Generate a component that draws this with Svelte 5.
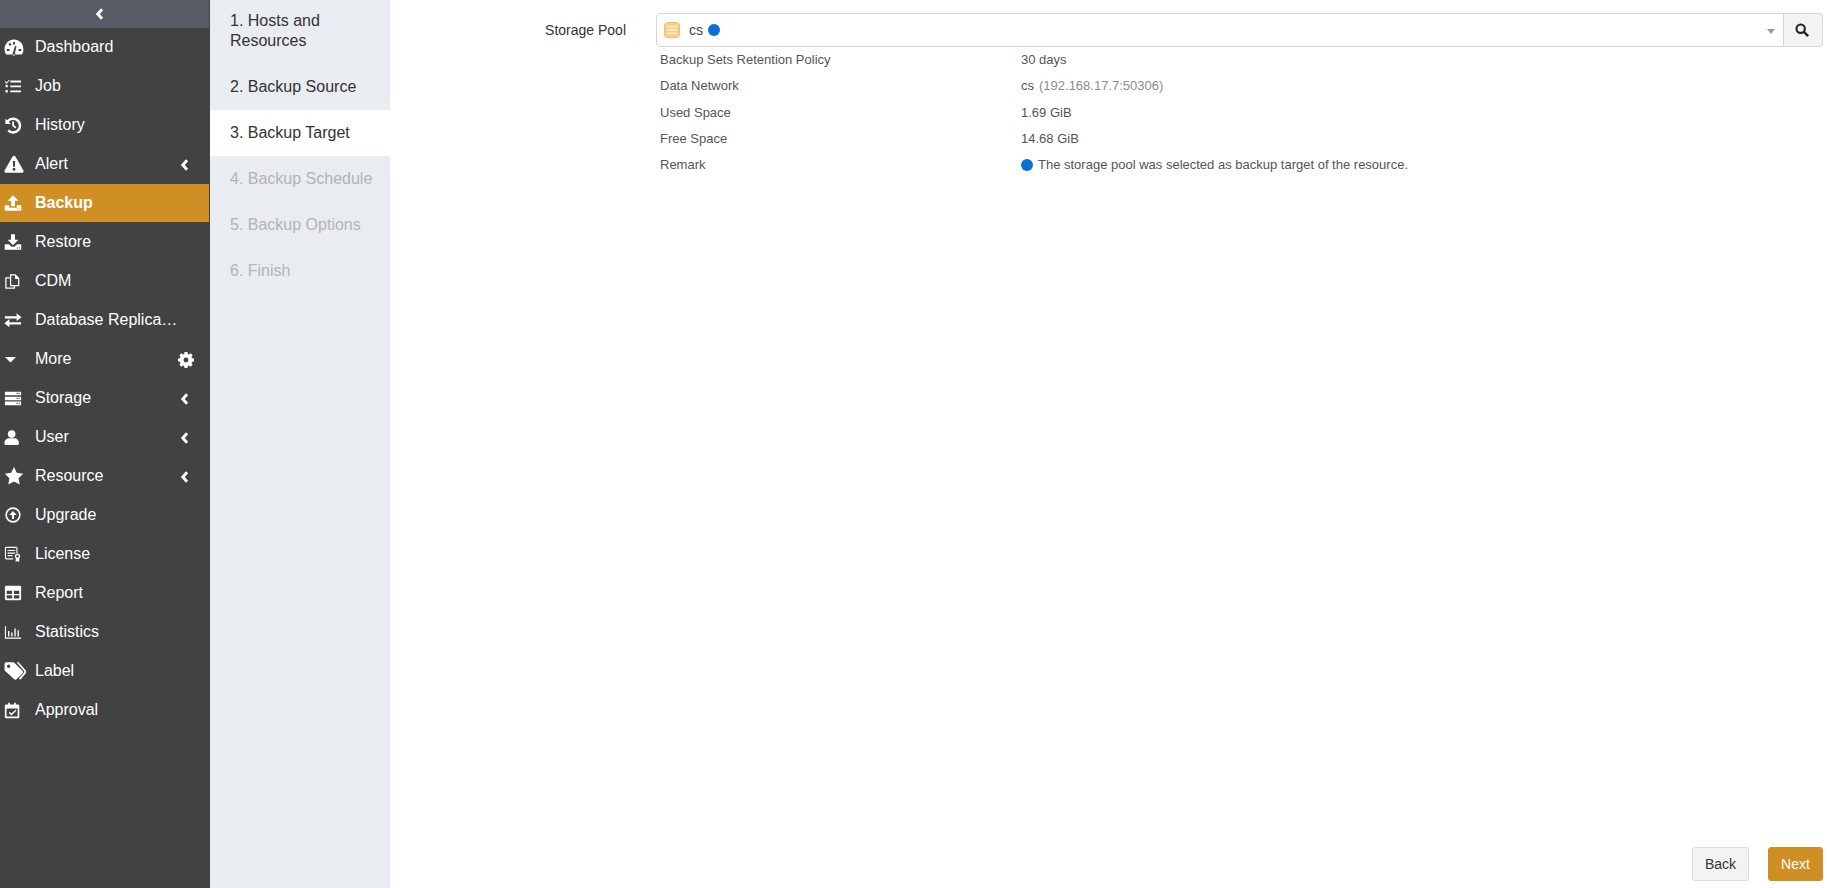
<script>
const menu = [
  { name: 'Dashboard', icon: 'dashboard' },
  { name: 'Job', icon: 'job', size: 'sm' },
  { name: 'History', icon: 'history', size: 'sm' },
  { name: 'Alert', icon: 'alert', arrow: true },
  { name: 'Backup', icon: 'upload', active: true, size: 'sm' },
  { name: 'Restore', icon: 'download', size: 'sm' },
  { name: 'CDM', icon: 'copy', size: 'xs' },
  { name: 'Database Replication', icon: 'exchange', size: 'sm' },
  { name: 'More', icon: 'caret', gear: true },
  { name: 'Storage', icon: 'server', arrow: true, size: 'sm' },
  { name: 'User', icon: 'user', arrow: true, size: 'xs' },
  { name: 'Resource', icon: 'star', arrow: true },
  { name: 'Upgrade', icon: 'upgrade', size: 'sm' },
  { name: 'License', icon: 'license', size: 'sm' },
  { name: 'Report', icon: 'table', size: 'sm' },
  { name: 'Statistics', icon: 'chart', size: 'sm' },
  { name: 'Label', icon: 'tags', size: 'lg' },
  { name: 'Approval', icon: 'approval', size: 'xs' }
]

const steps = [
  { name: '1. Hosts and Resources', first: true },
  { name: '2. Backup Source' },
  { name: '3. Backup Target', current: true },
  { name: '4. Backup Schedule', off: true },
  { name: '5. Backup Options', off: true },
  { name: '6. Finish', off: true }
]

const rows = [
  ['Backup Sets Retention Policy', '30 days'],
  ['Data Network', 'cs'],
  ['Used Space', '1.69 GiB'],
  ['Free Space', '14.68 GiB'],
  ['Remark', 'The storage pool was selected as backup target of the resource.']
]
</script>

{#snippet chevron()}
  <svg class="chev" viewBox="0 0 10 14" width="9" height="12"><path d="M8 1.500 3 7l5 5.500" fill="none" stroke="currentColor" stroke-width="3.400"/></svg>
{/snippet}

{#snippet icon(n, size)}
  <svg class="ico {size || ''}" viewBox="0 0 20 20" fill="#fff">
    {#if n === 'dashboard'}
      <path fill-rule="evenodd" d="M10 2.600C4.700 2.600.6 6.900.6 12.200c0 1.900.5 3.700 1.500 5.200h15.800c1-1.500 1.500-3.300 1.500-5.200 0-5.300-4.100-9.600-9.400-9.600ZM9 5h2v2.400H9ZM4.500 7l1.700-1.200 1.300 2L5.900 9ZM2.800 12h2.700v2H2.800Zm11.700 0h2.700v2h-2.700ZM9 15.800l1.900-6.800 1.700.5-1.700 6.500a1.500 1.500 0 1 1-1.900-.2Z"/>
    {:else if n === 'job'}
      <path d="M7 4h12v2H7Zm0 5.500h12v2H7Zm0 5.500h12v2H7ZM1.500 4.500 3 5.800 5.500 3l.8.7L3 7.500.8 5.300Zm.2 4.200h2.500v2.600H1.700Zm0 5.800h2.500v2.600H1.700Z"/>
    {:else if n === 'history'}
      <path d="M1.500 3v6h6L5.200 6.700A6.300 6.300 0 1 1 5.500 15l-1.800 1.900A9 9 0 1 0 3.300 4.800Z"/><path d="M9.200 6h1.900v4.300l2.700 2-1.100 1.500-3.500-2.600Z"/>
    {:else if n === 'alert'}
      <path fill-rule="evenodd" d="M10 1.800c.6 0 1.100.3 1.400.8l8 14c.6 1-.1 2.200-1.300 2.200H1.900c-1.200 0-1.900-1.200-1.300-2.200l8-14c.3-.5.8-.8 1.400-.8ZM8.800 7l.3 5.800h1.800L11.200 7ZM10 13.800a1.500 1.500 0 1 0 0 3 1.500 1.500 0 0 0 0-3Z"/>
    {:else if n === 'upload'}
      <path fill-rule="evenodd" d="M10 1.500 16 7.500h-3.800v6H7.800v-6H4ZM.8 12.500h5v2.800h8.400v-2.800h5v6H.8ZM14.500 16.200h1v1h-1Zm2.200 0h1v1h-1Z"/>
    {:else if n === 'download'}
      <path fill-rule="evenodd" d="M7.800 1.500h4.400v6H16L10 13.500 4 7.500h3.800ZM.8 12.500h4.700L8.300 15.300h3.400l2.800-2.800h4.700v6H.8ZM14.500 16.200h1v1h-1Zm2.200 0h1v1h-1Z"/>
    {:else if n === 'copy'}
      <path fill-rule="evenodd" d="M7 1.500h6.500L18 6v9.500H13v3H1.500V5H7Zm1.500 1.500v11h8V7H13V3Zm-1.500 3.500H3V17h8.500v-1.500H7Z"/>
    {:else if n === 'exchange'}
      <path d="M14 2.500 19.500 7 14 11V8.200H1V5.800h13ZM6 9l-5.500 4.500L6 18v-3h13v-2.400H6Z"/>
    {:else if n === 'caret'}
      <path d="M1 8h11L6.500 13.500Z"/>
    {:else if n === 'server'}
      <path fill-rule="evenodd" d="M1 3h18v4H1Zm0 5.500h18v4H1ZM1 14h18v4H1Zm13-9.800h1.200v1.400H14Zm2.300 0h1.200v1.400h-1.200Zm-2.300 5.600h1.200v1.400H14Zm2.300 0h1.200v1.400h-1.200Zm-2.300 5.500h1.200v1.400H14Zm2.300 0h1.200v1.400h-1.200Z"/>
    {:else if n === 'user'}
      <circle cx="9" cy="6" r="4.500"/><path d="M6 11h6c3 0 5.500 2.400 5.500 5.300V17c0 1-.8 1.800-1.800 1.800H2.300C1.300 18.800.5 18 .5 17v-.7C.5 13.400 3 11 6 11Z"/>
    {:else if n === 'star'}
      <path d="M10 .9l2.800 5.900 6.400.9-4.600 4.500 1.100 6.400-5.700-3-5.700 3 1.100-6.400L.8 7.700l6.400-.9Z"/>
    {:else if n === 'upgrade'}
      <path fill-rule="evenodd" d="M10 1.500a8.500 8.500 0 1 1 0 17 8.500 8.500 0 0 1 0-17Zm0 1.800a6.700 6.700 0 1 0 0 13.400 6.700 6.700 0 0 0 0-13.400ZM10 5.500l4.200 4.500h-3v4.500H8.800V10h-3Z"/>
    {:else if n === 'license'}
      <path fill-rule="evenodd" d="M1 3.500C1 2.700 1.700 2 2.500 2h11c.8 0 1.500.7 1.500 1.500V9h-1.300V3.300H2.300v11.400h8V16H2.500C1.700 16 1 15.300 1 14.500ZM4 5.500h8.500v1.300H4Zm0 2.800h8.500v1.300H4Zm0 2.800h5.500v1.300H4Z"/><path fill-rule="evenodd" d="M15 9.500a3 3 0 0 1 2 5.200V19l-2-1.200-2 1.200v-4.300a3 3 0 0 1 2-5.200Zm0 1.500a1.500 1.500 0 1 0 0 3 1.500 1.500 0 0 0 0-3Z"/>
    {:else if n === 'table'}
      <path fill-rule="evenodd" d="M2.500 2h15c.8 0 1.500.7 1.500 1.500v13c0 .8-.7 1.500-1.500 1.500h-15C1.700 18 1 17.300 1 16.500v-13C1 2.700 1.700 2 2.500 2ZM3 7.500v3.500h6V7.500Zm8 0v3.500h6V7.500ZM3 12.500V16h6v-3.500Zm8 0V16h6v-3.500Z"/>
    {:else if n === 'chart'}
      <path d="M1 3.500h1.300v12.700H19v1.300H1ZM4.500 9h1.500v6H4.500Zm3.500 1.500h1.500V15H8ZM11.500 6H13v9h-1.500ZM15 8h1.500v7H15Z"/>
    {:else if n === 'tags'}
      <path fill-rule="evenodd" d="M.5 3.500C.5 2.700 1.200 2 2 2h6.300c.4 0 .8.200 1.100.5l7.500 7.500c.6.600.6 1.500 0 2.100l-5.500 5.500c-.6.600-1.500.6-2.100 0L1 10C.7 9.700.5 9.300.5 8.900ZM4.200 4.200a1.500 1.500 0 1 0 0 3 1.500 1.500 0 0 0 0-3Z"/><path d="M11.500 2h1.800l6.200 7c1 1.100 1 2.300 0 3.400L14.800 18l-1.300-1.200 4.700-5.500c.4-.5.400-.9 0-1.400Z"/>
    {:else if n === 'approval'}
      <path fill-rule="evenodd" d="M5 1h2v2h5V1h2v2h2.500c.8 0 1.500.7 1.500 1.500v13c0 .8-.7 1.500-1.500 1.500h-14C1.700 19 1 18.300 1 17.500v-13C1 3.700 1.700 3 2.500 3H5Zm-2 6.500V17h13V7.500Zm10.300 1.600 1.200 1.200-5.700 5.500-3.100-3 1.200-1.200 1.900 1.800Z"/>
    {/if}
  </svg>
{/snippet}

<div class="page">
  <aside class="side">
    <div class="collapse">{@render chevron()}</div>
    <nav>
      {#each menu as m}
        <div class="item" class:active={m.active}>
          <span class="ic">{@render icon(m.icon, m.size)}</span>
          <span class="name">{m.name}</span>
          {#if m.arrow}
            <span class="tail">{@render chevron()}</span>
          {/if}
          {#if m.gear}
            <span class="tail gear">
              <svg viewBox="0 0 20 20" width="16" height="16" fill="#fff"><path fill-rule="evenodd" d="M8.200 0h3.600l.5 2.500 1.300.6 2.200-1.400 2.500 2.500-1.400 2.200.6 1.300 2.500.5v3.600l-2.500.5-.6 1.300 1.400 2.200-2.500 2.500-2.200-1.400-1.300.6-.5 2.500H8.200l-.5-2.500-1.300-.6-2.200 1.400-2.500-2.500 1.400-2.200-.6-1.300L0 11.800V8.200l2.500-.5.6-1.300-1.400-2.200 2.500-2.500 2.200 1.400 1.300-.6ZM10 7a3 3 0 1 0 0 6 3 3 0 0 0 0-6Z"/></svg>
            </span>
          {/if}
        </div>
      {/each}
    </nav>
  </aside>

  <div class="steps">
    {#each steps as s}
      <div class="step" class:first={s.first} class:current={s.current} class:off={s.off}>{s.name}</div>
    {/each}
  </div>

  <main class="main">
    <div class="form">
      <label class="lbl" for="pool">Storage Pool</label>
      <div class="field">
        <div class="group">
          <div class="select" id="pool">
            <svg class="pool" viewBox="0 0 16 16" width="16" height="16">
              <rect x="0.500" y="0.500" width="15" height="15" rx="3" fill="#fdd08a" stroke="#fcbc62"/>
              <path d="M3 4.500h10M3 8h10M3 11.500h10" stroke="#fff3df" stroke-width="1.300"/>
            </svg>
            <span class="val">cs</span>
            <span class="dot"></span>
            <span class="caret"></span>
          </div>
          <button class="search" aria-label="Search">
            <svg viewBox="0 0 16 16" width="14" height="14"><circle cx="6.500" cy="6.500" r="4.800" fill="none" stroke="#222" stroke-width="2.400"/><path d="m10 10 5 5" stroke="#222" stroke-width="2.800"/></svg>
          </button>
        </div>
        <div class="info">
          {#each rows as r, i}
            <div class="row">
              <span class="key">{r[0]}</span>
              <span class="v">
                {#if i === 4}<span class="dot small"></span>{/if}{r[1]}{#if i === 1}<span class="ip">(192.168.17.7:50306)</span>{/if}
              </span>
            </div>
          {/each}
        </div>
      </div>
    </div>
    <div class="foot">
      <button class="btn">Back</button>
      <button class="btn next">Next</button>
    </div>
  </main>
</div>

<style>
:global(body) {
  margin: 0;
  background: #fff;
}
.page {
  display: flex;
  height: 888px;
  overflow: hidden;
  font-family: "Liberation Sans", Arial, sans-serif;
  color: #333;
}
.side {
  width: 210px;
  flex: none;
  background: #424242;
  color: #fff;
}
.collapse {
  height: 28px;
  background: #585c66;
  display: flex;
  justify-content: center;
  align-items: center;
  margin-right: 1px;
  padding-right: 11px;
}
.item {
  height: 38px;
  margin-bottom: 1px;
  display: flex;
  align-items: center;
  font-size: 16px;
  padding-left: 4px;
  position: relative;
}
.item.active {
  background: #cf8f24;
  font-weight: bold;
  margin-right: 1px;
}
.ic {
  width: 31px;
  flex: none;
  display: flex;
}
.ico {
  width: 20px;
  height: 20px;
}
.ico.sm {
  width: 18px;
  height: 18px;
}
.ico.xs {
  width: 17px;
  height: 17px;
}
.ico.lg {
  width: 22px;
  height: 22px;
}
.name {
  width: 143px;
  white-space: nowrap;
  overflow: hidden;
  text-overflow: ellipsis;
}
.tail {
  position: absolute;
  left: 180px;
  top: 14px;
  display: flex;
}
.tail.gear {
  left: 178px;
  top: 12px;
}
.steps {
  width: 180px;
  flex: none;
  background: #e9ecf1;
}
.step {
  font-size: 16px;
  line-height: 20px;
  padding: 13px 10px 13px 20px;
}
.step.first {
  padding: 11px 20px 13px;
}
.step.current {
  background: #fff;
}
.step.off {
  color: #b4b4b4;
}
.main {
  flex: 1;
  display: flex;
  flex-direction: column;
  padding: 13px 4px 7px 0;
}
.form {
  display: flex;
  flex: 1;
  align-items: flex-start;
}
.lbl {
  width: 236px;
  flex: none;
  text-align: right;
  font-size: 14px;
  line-height: 34px;
}
.field {
  flex: 1;
  margin-left: 30px;
}
.group {
  display: flex;
  height: 34px;
}
.select {
  flex: 1;
  box-sizing: border-box;
  border: 1px solid #d3d5dc;
  border-radius: 4px 0 0 4px;
  display: flex;
  align-items: center;
  padding-left: 7px;
  font-size: 14px;
  position: relative;
}
.pool {
  margin-right: 9px;
}
.val {
  margin-right: 5px;
  color: #444;
}
.dot {
  width: 12px;
  height: 12px;
  border-radius: 50%;
  background: #0a6fd6;
  display: inline-block;
}
.caret {
  position: absolute;
  right: 8px;
  top: 15px;
  border-left: 4px solid transparent;
  border-right: 4px solid transparent;
  border-top: 5px solid #999;
}
.search {
  width: 39px;
  box-sizing: border-box;
  border: 1px solid #d8d8d8;
  border-left: 0;
  border-radius: 0 4px 4px 0;
  background: #f3f3f3;
  display: flex;
  align-items: center;
  justify-content: center;
  padding: 0 2px 0 0;
}
.info {
  margin-top: -1px;
  padding-left: 4px;
  font-size: 13px;
  color: #555;
}
.row {
  display: flex;
  height: 26.44px;
  align-items: center;
}
.key {
  width: 361px;
  flex: none;
}
.v {
  display: flex;
  align-items: center;
}
.dot.small {
  margin-right: 5px;
}
.ip {
  color: #8c8c8c;
  margin-left: 5px;
}
.foot {
  display: flex;
  justify-content: flex-end;
  gap: 19px;
}
.btn {
  height: 34px;
  width: 57px;
  box-sizing: border-box;
  border: 1px solid #ddd;
  border-radius: 3px;
  background: #f3f3f3;
  color: #333;
  font: 14px "Liberation Sans", Arial, sans-serif;
  padding: 0;
}
.btn.next {
  width: 55px;
  background: #cf8f24;
  border-color: #cf8f24;
  color: #fff;
}
</style>
